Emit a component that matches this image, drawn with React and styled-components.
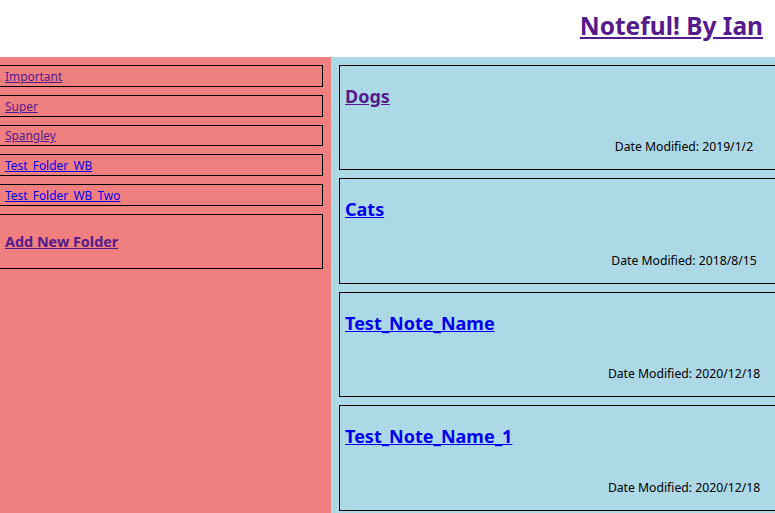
import React from 'react'
import styled, { createGlobalStyle } from 'styled-components'

const GlobalStyle = createGlobalStyle`
  html, body {
    margin: 0;
    padding: 0;
    background: #fff;
    font-family: "Noto Sans", "Open Sans", sans-serif;
    overflow: hidden;
  }
`

const visited = '#551a8b'
const unvisited = '#0000ee'

const Page = styled.div`
  width: 775px;
  height: 513px;
  display: flex;
  flex-direction: column;
  overflow: hidden;
`

const Header = styled.header`
  height: 57px;
  display: flex;
  justify-content: flex-end;
  align-items: center;
  padding-right: 12px;
  box-sizing: border-box;
`

const Title = styled.a`
  font-size: 24.5px;
  font-weight: 700;
  color: ${visited};
  text-decoration: underline;
  margin-top: -7px;
`

const Body = styled.div`
  flex: 1;
  display: flex;
  min-height: 0;
`

const Sidebar = styled.nav`
  width: 331px;
  flex-shrink: 0;
  background: #f08080;
  padding-top: 8px;
  box-sizing: border-box;
  display: flex;
  flex-direction: column;
  gap: 8px;
`

const FolderItem = styled.div`
  margin-left: -8px;
  width: 331px;
  height: 21.8px;
  flex-shrink: 0;
  box-sizing: border-box;
  border: 1px solid #000;
  padding-left: 12px;
  display: flex;
  align-items: center;
`

const FolderLink = styled.a`
  font-size: 11.9px;
  color: ${p => (p.$visited ? visited : unvisited)};
  text-decoration: underline;
`

const AddFolder = styled.div`
  margin-left: -8px;
  width: 331px;
  height: 55px;
  flex-shrink: 0;
  box-sizing: border-box;
  border: 1px solid #000;
  padding-left: 12px;
  display: flex;
  align-items: center;
`

const AddLink = styled.a`
  font-size: 14.4px;
  font-weight: 700;
  color: ${visited};
  text-decoration: underline;
`

const Main = styled.main`
  flex: 1;
  background: #add8e6;
  padding: 8px 0 0 8px;
  display: flex;
  flex-direction: column;
  gap: 8px;
  overflow: hidden;
`

const NoteCard = styled.div`
  width: 470px;
  height: 105.4px;
  flex-shrink: 0;
  box-sizing: border-box;
  border: 1px solid #000;
  padding: 0 5px;
  display: flex;
  flex-direction: column;
`

const NoteTitle = styled.a`
  margin-top: 18px;
  font-size: 18px;
  font-weight: 700;
  color: ${p => (p.$visited ? visited : unvisited)};
  text-decoration: underline;
  align-self: flex-start;
`

const DateRow = styled.div`
  margin-top: auto;
  margin-bottom: 14px;
  width: 424px;
  display: flex;
  justify-content: flex-end;
`

const DateText = styled.div`
  width: 170px;
  text-align: center;
  font-size: 12.2px;
  color: #000;
`

const folders = [
  { name: 'Important', visited: true },
  { name: 'Super', visited: true },
  { name: 'Spangley', visited: true },
  { name: 'Test_Folder_WB', visited: false },
  { name: 'Test_Folder_WB_Two', visited: false },
]

const notes = [
  { name: 'Dogs', date: '2019/1/2', visited: true },
  { name: 'Cats', date: '2018/8/15', visited: false },
  { name: 'Test_Note_Name', date: '2020/12/18', visited: false },
  { name: 'Test_Note_Name_1', date: '2020/12/18', visited: false },
]

export default function App() {
  return (
    <>
      <GlobalStyle />
      <Page>
        <Header>
          <Title href="#">Noteful! By Ian</Title>
        </Header>
        <Body>
          <Sidebar>
            {folders.map(f => (
              <FolderItem key={f.name}>
                <FolderLink href="#" $visited={f.visited}>{f.name}</FolderLink>
              </FolderItem>
            ))}
            <AddFolder>
              <AddLink href="#">Add New Folder</AddLink>
            </AddFolder>
          </Sidebar>
          <Main>
            {notes.map(n => (
              <NoteCard key={n.name}>
                <NoteTitle href="#" $visited={n.visited}>{n.name}</NoteTitle>
                <DateRow>
                  <DateText>Date Modified: {n.date}</DateText>
                </DateRow>
              </NoteCard>
            ))}
          </Main>
        </Body>
      </Page>
    </>
  )
}
